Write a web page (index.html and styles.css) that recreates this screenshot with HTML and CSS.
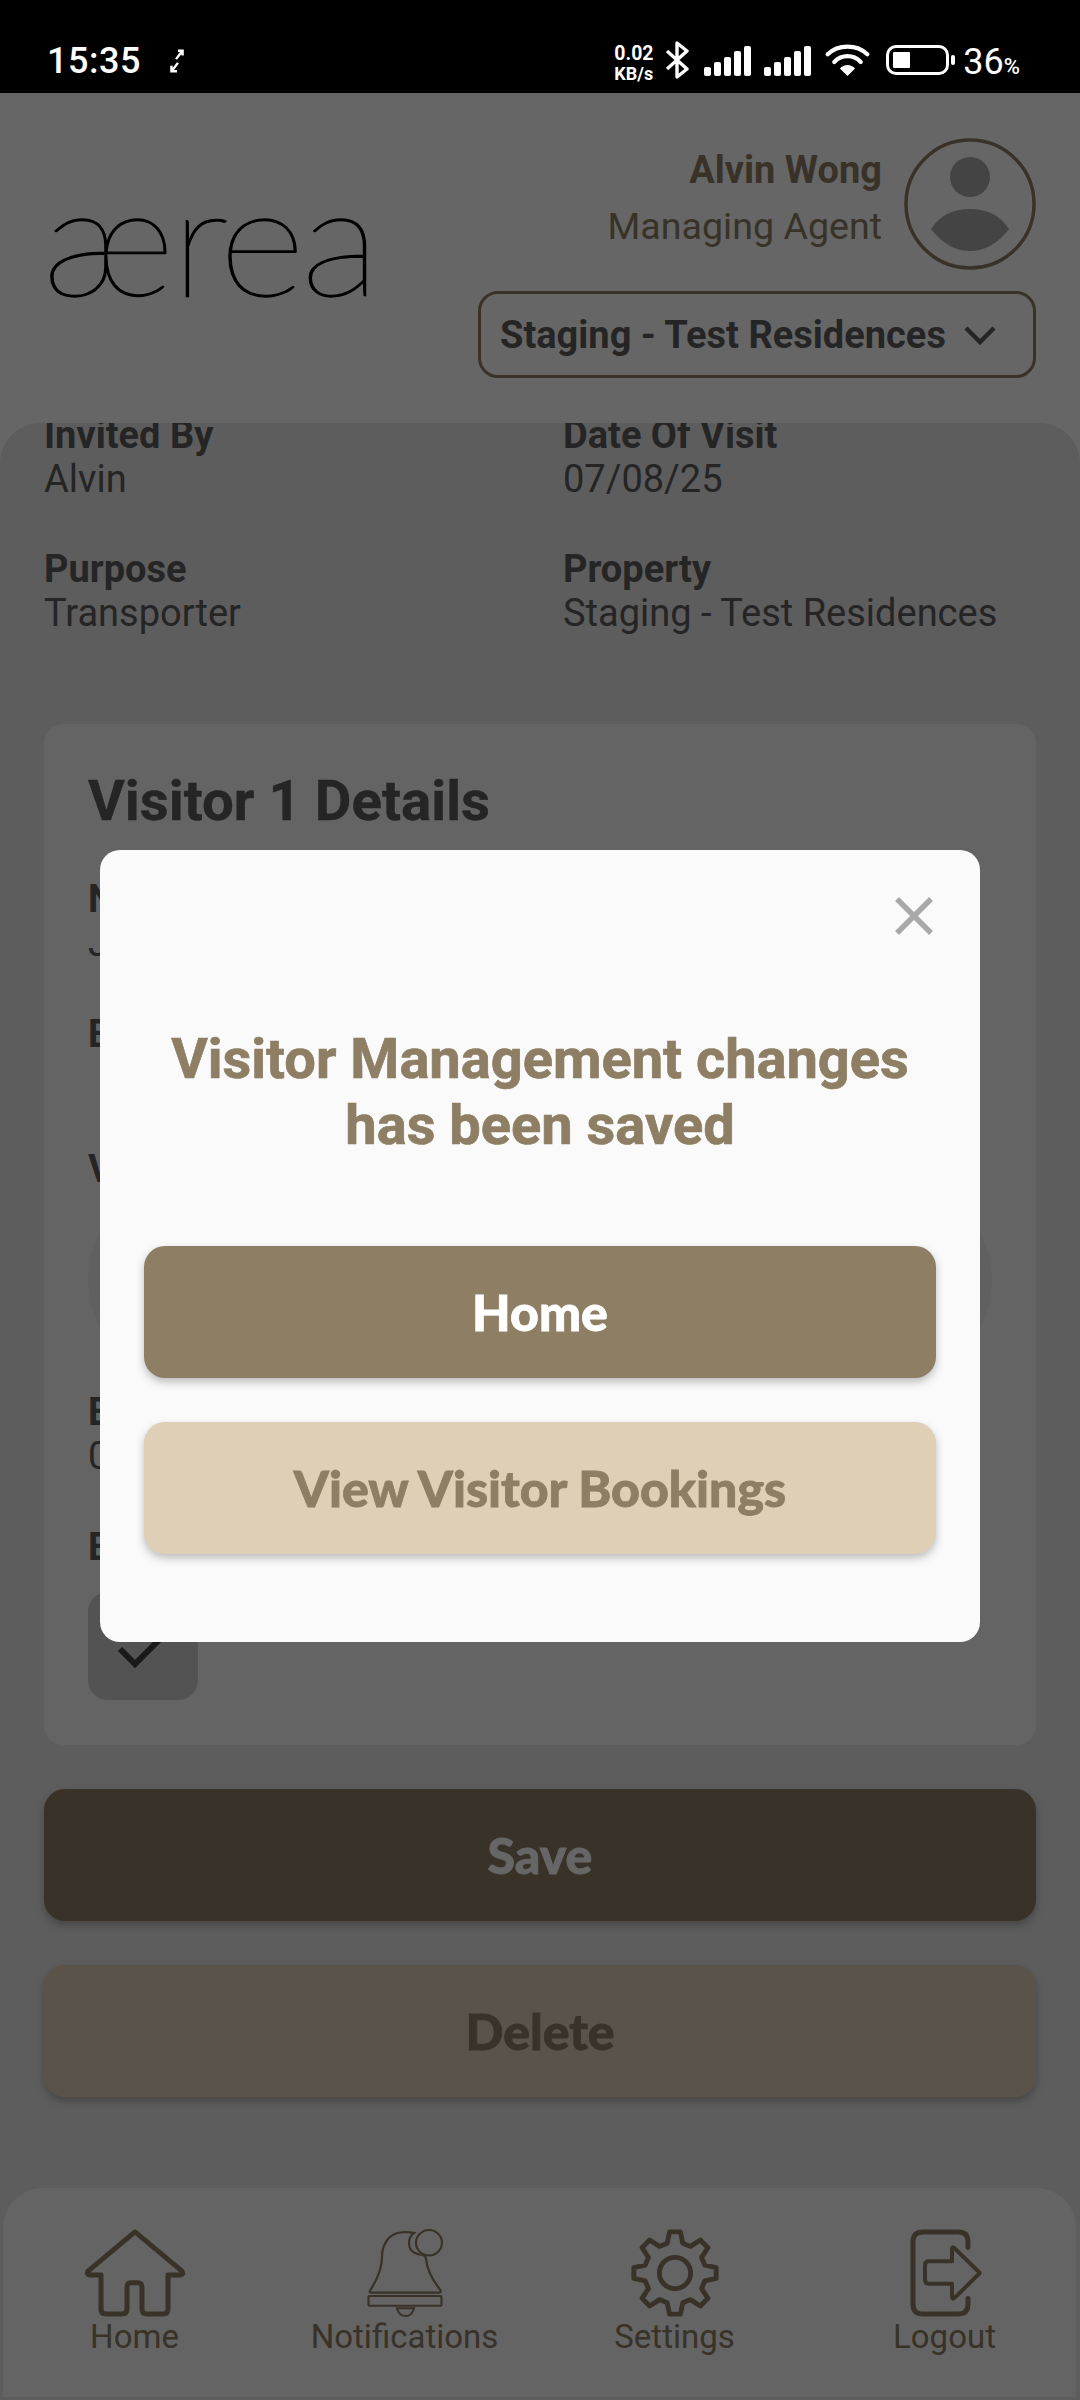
FILE: index.html
```html
<!DOCTYPE html>
<html lang="en">
<head>
  <meta charset="UTF-8" />
  <meta name="viewport" content="width=device-width, initial-scale=1" />
  <title>Visitor Management</title>
  <link rel="stylesheet" href="styles.css">
</head>
<body>

<div class="status-bar">
  <div class="status-left">
    <span class="clock">15:35</span>
    <svg class="rotate-icon" width="16" height="26" viewBox="0 0 16 28"><path d="M7 12 L13 4 M9 3 H14 V8 M9 16 L3 24 M2 19 V25 H8" fill="none" stroke="#fff" stroke-width="2.6"/></svg>
  </div>
  <div class="status-right">
    <div class="speed"><span>0.02</span><span>KB/s</span></div>
    <svg class="icon-bt" width="24" height="38" viewBox="0 0 24 38"><path d="M2 10 L22 28 L12 36 V2 L22 10 L2 28" fill="none" stroke="#fff" stroke-width="3.4" stroke-linejoin="round"/></svg>
    <svg class="icon-signal" width="47" height="30" viewBox="0 0 47 30"><rect x="0" y="21" width="7" height="9" rx="2" fill="#fff"/><rect x="10" y="16" width="7" height="14" rx="2" fill="#fff"/><rect x="20" y="11" width="7" height="19" rx="2" fill="#fff"/><rect x="30" y="5" width="7" height="25" rx="2" fill="#fff"/><rect x="40" y="0" width="7" height="30" rx="2" fill="#fff"/></svg>
    <svg class="icon-signal" width="47" height="30" viewBox="0 0 47 30"><rect x="0" y="21" width="7" height="9" rx="2" fill="#fff"/><rect x="10" y="16" width="7" height="14" rx="2" fill="#fff"/><rect x="20" y="11" width="7" height="19" rx="2" fill="#fff"/><rect x="30" y="5" width="7" height="25" rx="2" fill="#fff"/><rect x="40" y="0" width="7" height="30" rx="2" fill="#fff"/></svg>
    <svg class="icon-wifi" width="47" height="34" viewBox="0 0 48 36"><path d="M3 12 C14 1 34 1 45 12 M10 20 C18 12 30 12 38 20" fill="none" stroke="#fff" stroke-width="4.5" stroke-linecap="round"/><path d="M16 27 C20 22 28 22 32 27 L24 35 Z" fill="#fff"/></svg>
    <div class="battery"><div class="battery-level"></div></div>
    <div class="battery-tip"></div>
    <div class="percent">36<small>%</small></div>
  </div>
</div>

<div class="page">
  <header class="top">
    <div class="logo">ærea</div>
    <div class="top-right">
      <div class="user-row">
        <div class="user-text">
          <div class="user-name">Alvin Wong</div>
          <div class="user-role">Managing Agent</div>
        </div>
        <div class="avatar">
          <svg width="132" height="132" viewBox="0 0 132 132"><circle cx="66" cy="66" r="64" fill="none" stroke="#8d7e64" stroke-width="3.5"/><circle cx="66" cy="39" r="20" fill="#aaa"/><path d="M27 91 Q40 71 66 71 Q92 71 105 91 Q88 113 66 113 Q44 113 27 91 Z" fill="#aaa"/></svg>
        </div>
      </div>
      <div class="site-select">
        <span>Staging - Test Residences</span>
        <svg width="32" height="20" viewBox="0 0 32 20"><path d="M2 3 L16 17 L30 3" fill="none" stroke="#5c5c5c" stroke-width="4.5"/></svg>
      </div>
    </div>
  </header>

  <main class="panel">
    <div class="panel-inner">
      <div class="info-grid">
        <div class="info-item"><b>Invited By</b><span>Alvin</span></div>
        <div class="info-item"><b>Date Of Visit</b><span>07/08/25</span></div>
        <div class="info-item"><b>Purpose</b><span>Transporter</span></div>
        <div class="info-item"><b>Property</b><span>Staging - Test Residences</span></div>
      </div>

      <section class="card">
        <h2>Visitor 1 Details</h2>
        <div class="field"><b>Name</b><span>John</span></div>
        <div class="field field-wide"><b>Email</b></div>
        <div class="field field-tight"><b>Vehicle Number</b></div>
        <div class="pill"></div>
        <div class="field"><b>Expected Arrival</b><span>07/08/25</span></div>
        <div class="field field-last"><b>Entry Approved</b></div>
        <div class="check">
          <svg width="110" height="108" viewBox="0 0 110 108"><path d="M32 57 L47 72 L85 34" fill="none" stroke="#414141" stroke-width="6"/></svg>
        </div>
      </section>

      <button class="btn btn-dark">Save</button>
      <button class="btn btn-light">Delete</button>
    </div>
  </main>

  <nav class="bottom-nav">
    <div class="nav-item">
      <svg width="102" height="88" viewBox="0 0 102 90" preserveAspectRatio="none"><path d="M51 3 L98 43 Q100 47 96 47 H84 V82 Q84 87 79 87 H63 Q58 87 58 82 V60 Q58 55 54 55 H47 Q43 55 43 60 V82 Q43 87 38 87 H22 Q17 87 17 82 V47 H6 Q2 47 4 43 Z" fill="none" stroke="#8d7e64" stroke-width="5" stroke-linejoin="round"/></svg>
      <span>Home</span>
    </div>
    <div class="nav-item">
      <svg width="76" height="88" viewBox="0 0 76 90" preserveAspectRatio="none"><path d="M47 4 Q30 1 22 9 Q15 17 15 28 Q15 44 3 63 Q2 65 4 65 H72 Q75 65 73 62 Q60 45 59 30 Q58 26 52 26 Q42 24 42 14 Q42 8 47 4 Z" fill="none" stroke="#8d7e64" stroke-width="2.2"/><circle cx="62" cy="14" r="13" fill="none" stroke="#8d7e64" stroke-width="2.2"/><rect x="1.5" y="68.5" width="73" height="10" rx="1" fill="none" stroke="#8d7e64" stroke-width="2.2"/><path d="M30 81 H47 Q45 89 38.5 89 Q32 89 30 81 Z" fill="none" stroke="#8d7e64" stroke-width="2"/></svg>
      <span>Notifications</span>
    </div>
    <div class="nav-item">
      <svg width="88" height="88" viewBox="0 0 90 90"><polygon points="37,14.5 39.5,2.9 50.5,2.9 53,14.5 60.9,17.8 70.9,11.3 78.7,19.1 72.2,29.1 75.5,37 87.1,39.5 87.1,50.5 75.5,53 72.2,60.9 78.7,70.9 70.9,78.7 60.9,72.2 53,75.5 50.5,87.1 39.5,87.1 37,75.5 29.1,72.2 19.1,78.7 11.3,70.9 17.8,60.9 14.5,53 2.9,50.5 2.9,39.5 14.5,37 17.8,29.1 11.3,19.1 19.1,11.3 29.1,17.8" fill="none" stroke="#8d7e64" stroke-width="5" stroke-linejoin="round"/><circle cx="45" cy="45" r="16" fill="none" stroke="#8d7e64" stroke-width="5"/></svg>
      <span>Settings</span>
    </div>
    <div class="nav-item">
      <svg width="74" height="88" viewBox="0 0 74 90" preserveAspectRatio="none"><path d="M60 19 V13 Q60 3 50 3 H15 Q5 3 5 13 V77 Q5 87 15 87 H50 Q60 87 60 77 V71" fill="none" stroke="#8d7e64" stroke-width="5" stroke-linecap="round"/><path d="M21 33 H44 V21 Q44 17 47 20 L71 44 Q72 45 71 46 L47 70 Q44 73 44 69 V56 H21 Q17 56 17 52 V37 Q17 33 21 33 Z" fill="none" stroke="#8d7e64" stroke-width="4" stroke-linejoin="round"/></svg>
      <span>Logout</span>
    </div>
  </nav>
</div>

<div class="overlay">
  <div class="modal">
    <div class="modal-close">
      <svg width="38" height="38" viewBox="0 0 38 38"><path d="M2 2 L36 36 M36 2 L2 36" stroke="#a9a9a9" stroke-width="5.5"/></svg>
    </div>
    <h3>Visitor Management changes<br>has been saved</h3>
    <button class="btn btn-dark">Home</button>
    <button class="btn btn-light">View Visitor Bookings</button>
  </div>
</div>

</body>
</html>
```

FILE: styles.css
```css
* {
  box-sizing: border-box;
}
body {
  margin: 0;
  width: 1080px;
  height: 2400px;
  overflow: hidden;
  background: white;
  font-family: Roboto, sans-serif;
}
.status-bar {
  position: relative;
  z-index: 5;
  height: 93px;
  background: black;
  color: white;
  display: flex;
  justify-content: space-between;
  padding: 41px 60px 0 47px;
}
.status-left {
  display: flex;
  align-items: flex-start;
  gap: 28px;
}
.clock {
  font-size: 36px;
  font-weight: 500;
  line-height: 40px;
  letter-spacing: 0.5px;
}
.rotate-icon {
  margin-top: 7px;
}
.status-right {
  display: flex;
  align-items: flex-start;
}
.speed {
  display: flex;
  flex-direction: column;
  width: 42px;
  margin-top: 3px;
  font-size: 19.5px;
  font-weight: 700;
  line-height: 20px;
  white-space: nowrap;
}
.speed span:last-child {
  font-size: 18px;
  line-height: 19px;
}
.icon-bt {
  margin-left: 9px;
}
.icon-signal {
  margin-top: 5px;
  margin-left: 13px;
}
.icon-bt + .icon-signal {
  margin-left: 15px;
}
.icon-wifi {
  margin-top: 2px;
  margin-left: 13px;
}
.battery {
  width: 63px;
  height: 30px;
  margin: 4px 0 0 15px;
  padding: 4px;
  border: 3px solid white;
  border-radius: 10px;
}
.battery-level {
  width: 17px;
  height: 16px;
  background: white;
  border-radius: 1px;
}
.battery-tip {
  width: 4px;
  height: 10px;
  background: white;
  border-radius: 2px;
  margin: 14px 0 0 2px;
}
.percent {
  margin: 2px 0 0 8px;
  font-size: 36px;
  line-height: 38px;
}
.percent small {
  font-size: 22px;
  font-weight: 500;
}

.page {
  height: 2307px;
  display: flex;
  flex-direction: column;
}
.top {
  height: 330px;
  flex: none;
  display: flex;
  justify-content: space-between;
  padding: 45px 44px 0 42px;
}
.logo {
  font-family: Lato, sans-serif;
  font-weight: 100;
  font-size: 154px;
  line-height: 154px;
  letter-spacing: -4px;
  color: black;
  margin-top: 22px;
  -webkit-text-stroke: 1.3px black;
  transform: scaleX(1.09);
  transform-origin: left center;
}
.top-right {
  width: 558px;
}
.user-row {
  display: flex;
  justify-content: flex-end;
  align-items: center;
  gap: 22px;
}
.user-text {
  margin-bottom: 12px;
  text-align: right;
  color: #8d7e64;
  font-size: 38px;
}
.user-name {
  font-weight: 700;
  line-height: 50px;
  margin-bottom: 6px;
}
.user-role {
  font-size: 37.6px;
  line-height: 50px;
}
.avatar {
  height: 132px;
}
.site-select {
  height: 87px;
  margin-top: 21px;
  border: 3.5px solid #8d7e64;
  border-radius: 20px;
  padding: 0 19px;
  display: flex;
  align-items: center;
  gap: 18px;
  font-size: 38px;
  font-weight: 700;
  color: #5c5c5c;
}

.panel {
  flex: 1;
  min-height: 0;
  background: #e8e8e8;
  border-radius: 40px 40px 0 0;
  overflow: hidden;
  position: relative;
}
.panel-inner {
  padding: 0 44px;
  margin-top: -10px;
}
.info-grid {
  display: grid;
  grid-template-columns: 519px 1fr;
  row-gap: 46px;
  color: #5c5c5c;
  font-size: 38px;
}
.info-item b,
.field b {
  display: block;
  line-height: 44px;
}
.info-item span,
.field span {
  display: block;
  line-height: 44px;
  font-weight: 400;
}
.card {
  height: 1021px;
  margin-top: 89px;
  background: #fbfbfb;
  border-radius: 20px;
  padding: 47px 44px 0;
  color: #5c5c5c;
  font-size: 38px;
}
.card h2 {
  margin: 0 0 46px;
  font-size: 56.4px;
  line-height: 60px;
  font-weight: 700;
  -webkit-text-stroke: 0.4px #5c5c5c;
}
.field {
  margin-bottom: 47px;
}
.field-wide {
  margin-bottom: 91px;
}
.field-tight {
  margin-bottom: 0;
}
.field-last {
  margin-bottom: 23px;
}
.pill {
  width: 904px;
  height: 190px;
  margin: -6px 0 15px;
  border-radius: 95px;
  background: #efefef;
}
.check {
  width: 110px;
  height: 108px;
  border-radius: 20px;
  background: #cfcfcf;
}

.btn {
  display: block;
  width: 100%;
  height: 132px;
  border: none;
  border-radius: 21px;
  font-family: Lato, sans-serif;
  font-size: 50px;
  font-weight: 900;
  box-shadow: 0 4px 9px rgba(0,0,0,0.25);
}
.btn-dark {
  background: #8d7e64;
  color: white;
  -webkit-text-stroke: 0.8px white;
}
.btn-light {
  background: #dfcfb6;
  color: #8d7e64;
  -webkit-text-stroke: 0.8px #8d7e64;
}
.panel-inner > .btn {
  margin-top: 44px;
}

.bottom-nav {
  position: absolute;
  left: 3px;
  right: 4px;
  bottom: 3px;
  height: 209px;
  background: #fbfbfb;
  border-radius: 40px 40px 0 0;
  display: grid;
  grid-template-columns: repeat(4, 270px);
  justify-content: center;
  padding-top: 41px;
  color: #8d7e64;
  font-size: 33px;
  line-height: 40px;
}
.nav-item {
  display: flex;
  flex-direction: column;
  align-items: center;
}

.overlay {
  position: fixed;
  left: 0;
  top: 0;
  width: 1080px;
  height: 2400px;
  z-index: 3;
  background: rgba(0,0,0,0.6);
  padding-top: 850px;
}
.modal {
  width: 880px;
  height: 792px;
  margin-left: 100px;
  background: #fafafa;
  border-radius: 20px;
  padding: 47px 44px 0;
}
.modal-close {
  display: flex;
  justify-content: flex-end;
  padding-right: 3px;
  margin-bottom: 91px;
}
.modal h3 {
  margin: 0 0 88px;
  text-align: center;
  font-size: 56px;
  line-height: 66px;
  font-weight: 700;
  color: #8d7e64;
  -webkit-text-stroke: 0.7px #8d7e64;
}
.modal .btn + .btn {
  margin-top: 44px;
}
```
